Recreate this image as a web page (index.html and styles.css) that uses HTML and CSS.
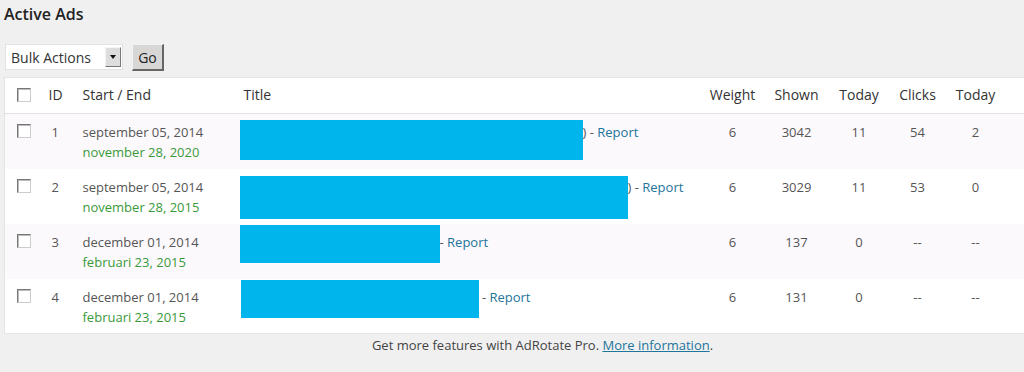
FILE: index.html
```html
<!DOCTYPE html>
<html>
<head>
<meta charset="utf-8">
<link rel="stylesheet" href="styles.css">
</head>
<body>
<div class="page">
  <h2 class="title">Active Ads</h2>
  <div class="tablenav">
    <div class="select-wrap">
      <select class="bulk"><option>Bulk Actions</option></select>
      <span class="select-arrow"></span>
    </div>
    <button class="go">Go</button>
  </div>
  <table class="ads">
    <thead>
      <tr>
        <th class="c-cb"><span class="cb"></span></th>
        <th class="c-id">ID</th>
        <th class="c-date">Start / End</th>
        <th class="c-title">Title</th>
        <th class="c-num c-weight">Weight</th>
        <th class="c-num c-shown">Shown</th>
        <th class="c-num c-today">Today</th>
        <th class="c-num c-clicks">Clicks</th>
        <th class="c-num c-today2">Today</th>
        <th class="c-rest"></th>
      </tr>
    </thead>
    <tbody>
      <tr class="alt">
        <td class="c-cb"><span class="cb"></span></td>
        <td class="c-id">1</td>
        <td class="c-date"><div>september 05, 2014</div><div class="end">november 28, 2020</div></td>
        <td class="c-title"><div class="title-cell"><span class="redact" style="width:343px;height:40px;margin-top:-2px"></span><span>) - <a href="#">Report</a></span></div></td>
        <td class="c-num">6</td>
        <td class="c-num">3042</td>
        <td class="c-num">11</td>
        <td class="c-num">54</td>
        <td class="c-num">2</td>
        <td class="c-rest"></td>
      </tr>
      <tr>
        <td class="c-cb"><span class="cb"></span></td>
        <td class="c-id">2</td>
        <td class="c-date"><div>september 05, 2014</div><div class="end">november 28, 2015</div></td>
        <td class="c-title"><div class="title-cell"><span class="redact" style="width:388px;height:43px;margin-top:-1px"></span><span>) - <a href="#">Report</a></span></div></td>
        <td class="c-num">6</td>
        <td class="c-num">3029</td>
        <td class="c-num">11</td>
        <td class="c-num">53</td>
        <td class="c-num">0</td>
        <td class="c-rest"></td>
      </tr>
      <tr class="alt">
        <td class="c-cb"><span class="cb"></span></td>
        <td class="c-id">3</td>
        <td class="c-date"><div>december 01, 2014</div><div class="end">februari 23, 2015</div></td>
        <td class="c-title"><div class="title-cell"><span class="redact" style="width:200px;height:38px;margin-top:-7px"></span><span>- <a href="#">Report</a></span></div></td>
        <td class="c-num">6</td>
        <td class="c-num">137</td>
        <td class="c-num">0</td>
        <td class="c-num">--</td>
        <td class="c-num">--</td>
        <td class="c-rest"></td>
      </tr>
      <tr>
        <td class="c-cb"><span class="cb"></span></td>
        <td class="c-id">4</td>
        <td class="c-date"><div>december 01, 2014</div><div class="end">februari 23, 2015</div></td>
        <td class="c-title"><div class="title-cell"><span class="redact" style="width:238px;height:38px;margin-top:-7px;margin-left:1px"></span><span>&nbsp;- <a href="#">Report</a></span></div></td>
        <td class="c-num">6</td>
        <td class="c-num">131</td>
        <td class="c-num">0</td>
        <td class="c-num">--</td>
        <td class="c-num">--</td>
        <td class="c-rest"></td>
      </tr>
    </tbody>
  </table>
  <p class="promo">Get more features with AdRotate Pro. <a href="#">More information</a>.</p>
</div>
</body>
</html>
```

FILE: styles.css
```css
html, body {
  margin: 0;
  padding: 0;
  overflow: hidden;
}
body {
  background: #f1f0f1;
  font-family: "Open Sans", "DejaVu Sans", sans-serif;
  color: #444;
}
.page {
  padding: 4px 0 0 4px;
  width: 1080px;
}
.title {
  margin: 0;
  font-size: 16px;
  line-height: 20px;
  font-weight: 600;
  color: #222;
}
.tablenav {
  display: flex;
  align-items: flex-start;
  gap: 9px;
  margin-top: 20px;
  padding-left: 1px;
}
.select-wrap {
  position: relative;
  width: 118px;
  height: 26px;
}
.bulk {
  appearance: none;
  -webkit-appearance: none;
  width: 118px;
  height: 26px;
  margin: 0;
  padding: 0 0 0 5px;
  border: 1px solid #e2e2e2;
  background: #fff;
  font-family: "Open Sans", sans-serif;
  font-size: 14px;
  color: #333;
  border-radius: 0;
}
.select-arrow {
  position: absolute;
  right: 2px;
  top: 3px;
  width: 14px;
  height: 18px;
  background: #ddd;
  border-top: 1px solid #f4f4f4;
  border-left: 1px solid #f4f4f4;
  border-right: 1px solid #777;
  border-bottom: 1px solid #777;
  pointer-events: none;
}
.select-arrow::after {
  content: "";
  position: absolute;
  left: 4px;
  top: 7px;
  border-left: 3px solid transparent;
  border-right: 3px solid transparent;
  border-top: 4px solid #111;
}
.go {
  width: 32px;
  height: 27px;
  margin: 0;
  padding: 0;
  background: #d9d7d6;
  border-top: 1px solid #f2f2f2;
  border-left: 1px solid #f2f2f2;
  border-right: 2px solid #666;
  border-bottom: 2px solid #666;
  font-family: "Open Sans", sans-serif;
  font-size: 14px;
  color: #222;
}
.ads {
  margin-top: 6px;
  width: 1077px;
  border: 1px solid #e5e5e5;
  border-collapse: collapse;
  background: #fff;
  table-layout: fixed;
}
.ads th, .ads td {
  box-sizing: border-box;
}
.ads th {
  height: 36px;
  padding: 0 10px 3px;
  font-size: 14px;
  font-weight: 400;
  color: #333;
  text-align: left;
  vertical-align: middle;
  border-bottom: 1px solid #e1e1e1;
}
.ads td {
  height: 55px;
  padding: 8px 10px 0;
  font-size: 13px;
  line-height: 20px;
  color: #555;
  vertical-align: top;
}
.ads tr.alt td {
  background: #fcf9fc;
}
.ads .c-cb {
  width: 34px;
  padding-left: 12px;
  padding-right: 8px;
}
.ads td.c-cb {
  padding-top: 10px;
}
.ads th.c-cb {
  padding-top: 0;
  padding-bottom: 2px;
}
.cb {
  display: block;
  width: 12px;
  height: 12px;
  background: #fff;
  border-top: 1px solid #777;
  border-left: 1px solid #777;
  border-right: 1px solid #ccc;
  border-bottom: 1px solid #ccc;
  box-shadow: inset 1px 1px 0 #bbb;
}
.ads .c-id {
  width: 34px;
}
.ads td.c-id {
  padding-left: 13px;
  padding-right: 7px;
}
.ads .c-date {
  width: 161px;
}
.ads .end {
  color: #3a9a3a;
}
.ads .c-title {
  width: 466px;
}
.ads td.c-title {
  padding-left: 6px;
}
.title-cell {
  display: flex;
  align-items: flex-start;
  white-space: nowrap;
}
.redact {
  display: block;
  flex: none;
  background: #00b5ec;
}
.ads a {
  color: #21759b;
  text-decoration: none;
}
.ads .c-num {
  text-align: center;
  padding-left: 0;
  padding-right: 0;
}
.ads .c-weight { width: 66px; }
.ads .c-shown { width: 62px; }
.ads .c-today { width: 63px; }
.ads .c-clicks { width: 54px; }
.ads .c-today2 { width: 62px; }
.promo {
  margin: 1px 0 0;
  width: 1077px;
  text-align: center;
  font-size: 13px;
  line-height: 20px;
  color: #444;
}
.promo a {
  color: #21759b;
  text-decoration: underline;
}
```
